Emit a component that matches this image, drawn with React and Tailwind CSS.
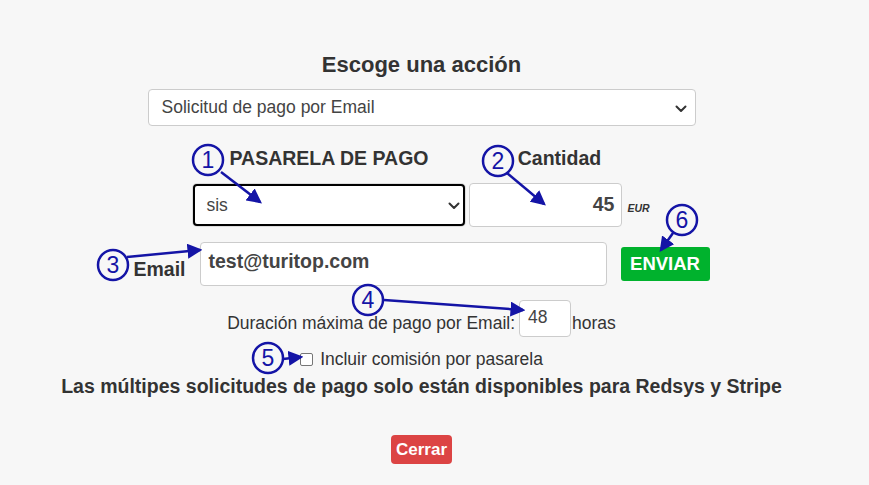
import { useState } from "react"

const font = { fontFamily: '"Liberation Sans", Arial, sans-serif' }

function Chevron({ className }) {
    return (
        <svg className={className} width="12" height="8" viewBox="0 0 12 8" fill="none">
            <path d="M1.5 1.5 L6 6 L10.5 1.5" stroke="#333" strokeWidth="2" strokeLinecap="round" strokeLinejoin="round" />
        </svg>
    )
}

function Marker({ cx, cy, n }) {
    return (
        <g>
            <circle cx={cx} cy={cy} r="15" fill="none" stroke="#1414a6" strokeWidth="2.5" />
            <text x={cx} y={cy + 8} textAnchor="middle" fontSize="23" fill="#1414a6" fontFamily="Liberation Sans, Arial, sans-serif">{n}</text>
        </g>
    )
}

function Arrow({ x1, y1, x2, y2 }) {
    return <line x1={x1} y1={y1} x2={x2} y2={y2} stroke="#1414a6" strokeWidth="2.5" markerEnd="url(#head)" />
}

function Annotations() {
    return (
        <svg className="absolute top-0 left-0 pointer-events-none" width="869" height="485">
            <defs>
                <marker id="head" markerWidth="6" markerHeight="6" refX="5" refY="3" orient="auto" markerUnits="strokeWidth">
                    <path d="M0 0 L6 3 L0 6 Z" fill="#1414a6" />
                </marker>
            </defs>
            <Arrow x1={221} y1={172} x2={260} y2={202} />
            <Marker cx={208} cy={160} n="1" />
            <Arrow x1={507} y1={173} x2={544} y2={204} />
            <Marker cx={498} cy={161} n="2" />
            <Arrow x1={127} y1={257} x2={200} y2={250} />
            <Marker cx={113} cy={265} n="3" />
            <Arrow x1={384} y1={300} x2={523} y2={310} />
            <Marker cx={368} cy={300} n="4" />
            <Arrow x1={283} y1={359} x2={301} y2={357} />
            <Marker cx={268} cy={358} n="5" />
            <Arrow x1={673} y1={233} x2={661} y2={250} />
            <Marker cx={682} cy={220} n="6" />
        </svg>
    )
}

export default function App() {
    const [comision, setComision] = useState(false)

    return (
        <div className="relative w-[869px] min-h-[485px] bg-[#f7f7f7] text-[#333]" style={font}>
            <div className="flex flex-col items-center pt-[53px] pr-[26px]">
                <h2 className="text-[22px] leading-[24px] font-bold">Escoge una acción</h2>

                <div className="relative mt-[12px] w-[548px] h-[37px] bg-white border border-[#ccc] rounded-[4px] flex items-center px-[13px]">
                    <span className="text-[17.5px] text-[#444]">Solicitud de pago por Email</span>
                    <Chevron className="absolute right-[8px] top-[15px]" />
                </div>

                <div className="mt-[21px] flex gap-[4px]">
                    <div className="w-[272px] text-center text-[19.5px] leading-[22px] font-bold">PASARELA DE PAGO</div>
                    <div className="w-[181px] text-center text-[19.5px] leading-[22px] font-bold">Cantidad</div>
                </div>

                <div className="mt-[14px] flex items-center gap-[4px]">
                    <div className="relative w-[272px] h-[42px] bg-white border-2 border-black rounded-[4px] flex items-center px-[11px] ring-1 ring-[#ddd] ring-offset-0">
                        <span className="text-[17.5px] text-[#444]">sis</span>
                        <Chevron className="absolute right-[3px] top-[16px]" />
                    </div>
                    <div className="flex items-end">
                        <div className="w-[153px] h-[44px] bg-white border border-[#ccc] rounded-[4px] flex items-center justify-end px-[7px]">
                            <span className="text-[19.5px] font-bold text-[#444]">45</span>
                        </div>
                        <span className="ml-[5px] mb-[10px] text-[10.5px] italic font-bold text-[#333]">EUR</span>
                    </div>
                </div>

                <div className="mt-[15px] flex items-center gap-[14px]">
                    <span className="mt-[9px] text-[19.5px] leading-[22px] font-bold">Email</span>
                    <div className="w-[407px] h-[44px] bg-white border border-[#ccc] rounded-[4px] flex items-center px-[8px] pb-[4px]">
                        <span className="text-[19.5px] font-bold text-[#444]">test@turitop.com</span>
                    </div>
                    <button className="w-[89px] h-[34px] bg-[#00b22d] rounded-[3px] text-white text-[18.5px] font-bold">ENVIAR</button>
                </div>

                <div className="mt-[14px] flex items-center text-[17.5px]">
                    <span className="mt-[9px]">Duración máxima de pago por Email:</span>
                    <div className="ml-[4px] w-[52px] h-[37px] bg-white border border-[#ccc] rounded-[4px] flex items-center px-[8px] pb-[2px]">
                        <span className="text-[17.5px] text-[#444]">48</span>
                    </div>
                    <span className="mt-[9px] ml-[1px]">horas</span>
                </div>

                <label className="mt-[12px] flex items-center gap-[7px] text-[17.5px] leading-[20px]">
                    <input
                        type="checkbox"
                        checked={comision}
                        onChange={() => setComision(!comision)}
                        className="w-[13px] h-[13px] appearance-none bg-white border border-[#767676] rounded-[2px]"
                    />
                    Incluir comisión por pasarela
                </label>

                <p className="mt-[7px] text-[19.5px] leading-[20px] font-bold">
                    Las múltipes solicitudes de pago solo están disponibles para Redsys y Stripe
                </p>

                <button className="mt-[39px] w-[61px] h-[29px] bg-[#dc4444] rounded-[4px] text-white text-[17px] font-bold">Cerrar</button>
            </div>

            <Annotations />
        </div>
    )
}
